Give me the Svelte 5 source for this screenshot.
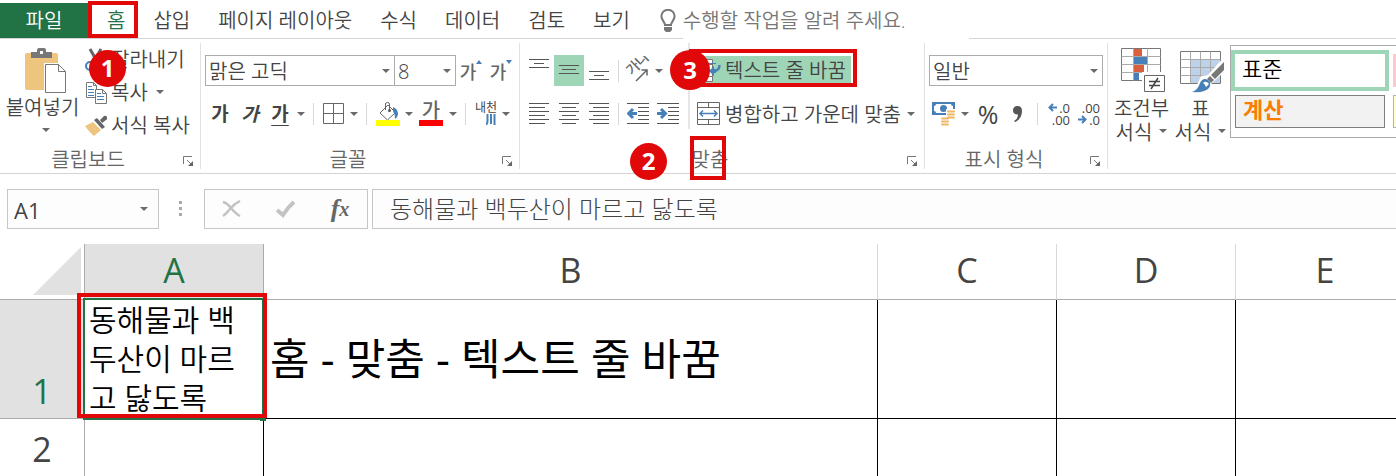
<script lang="ts">
	const tabs = ['삽입', '페이지 레이아웃', '수식', '데이터', '검토', '보기'];
	const columns = ['A', 'B', 'C', 'D', 'E'];

	let fontName = $state('맑은 고딕');
	let fontSize = $state('8');
	let numberFormat = $state('일반');
	let cellName = $state('A1');
	let formula = $state('동해물과 백두산이 마르고 닳도록');
</script>

{#snippet caret()}
	<svg class="caret" width="8" height="4" viewBox="0 0 8 4" aria-hidden="true">
		<path d="M0 0h8L4 4z" fill="#6a6a6a" />
	</svg>
{/snippet}

{#snippet more(label: string)}
	<button class="more" aria-label={label}>{@render caret()}</button>
{/snippet}

{#snippet lines(rows: number[][])}
	<svg width="22" height="24" viewBox="0 0 22 24" aria-hidden="true">
		{#each rows as [x, y, w]}
			<rect {x} {y} width={w} height="1" fill="#555" />
		{/each}
	</svg>
{/snippet}

{#snippet footer(label: string)}
	<footer class="group-footer">
		<span class="group-label">{label}</span>
		<button class="launcher" aria-label="{label} 설정">
			<svg width="11" height="11" viewBox="0 0 11 11" aria-hidden="true">
				<path d="M.5 8V.5H9M4 4l4 4" fill="none" stroke="#777" />
				<path d="M10 5v5H5z" fill="#666" />
			</svg>
		</button>
	</footer>
{/snippet}

<div class="app">
	<nav class="tabs">
		<button class="file">파일</button>
		<button class="tab home is-active">홈<span class="mark mark-home"></span></button>
		{#each tabs as tab (tab)}
			<button class="tab">{tab}</button>
		{/each}
		<label class="tell-me">
			<svg width="16" height="24" viewBox="0 0 16 24" aria-hidden="true">
				<path d="M5 16c0-3-3.6-4.600-3.600-9a6.600 6.200 0 0 1 13.200 0c0 4.400-3.600 6-3.600 9z" fill="none" stroke="#777" stroke-width="2" />
				<path d="M4 18h8v3l-2 2H6l-2-2z" fill="#777" />
			</svg>
			<input type="text" placeholder="수행할 작업을 알려 주세요." aria-label="수행할 작업" />
		</label>
	</nav>

	<div class="ribbon">
		<section class="group clipboard">
			<div class="body">
				<button class="paste">
					<svg width="42" height="46" viewBox="0 0 42 46" aria-hidden="true">
						<path d="M2 5h29q2 0 2 2v33q0 2-2 2H2q-2 0-2-2V7q0-2 2-2z" fill="#edc57f" />
						<path d="M6 10V4h6V2q0-2 2-2h5q2 0 2 2v2h6v6z" fill="#777" />
						<rect x="15" y="3" width="3" height="3" fill="#fff" />
						<path d="M19 15h16l8 8v23H19z" fill="#fff" />
						<path d="M20.500 16.500h13l7 7v21h-20zM33.500 16.500v7h7" fill="#fff" stroke="#777" />
					</svg>
					<span>붙여넣기</span>
					{@render caret()}
				</button>
				<div class="stack">
					<button class="item">
						<svg width="22" height="24" viewBox="0 0 22 24" aria-hidden="true">
							<path d="M5 1l8 14M16 1L8 15" stroke="#666" stroke-width="3" />
							<circle cx="5" cy="18" r="4" fill="none" stroke="#477fb8" stroke-width="2" />
							<circle cx="16" cy="18" r="4" fill="none" stroke="#477fb8" stroke-width="2" />
						</svg>
						잘라내기
					</button>
					<div class="split">
						<button class="item">
							<svg width="22" height="24" viewBox="0 0 22 24" aria-hidden="true">
								<path d="M1.500 1.500h7l3 3v12h-10zM8.500 1.500v3h3" fill="#fff" stroke="#777" />
								<path d="M3 5.500h4M3 8.500h6M3 11.500h6M3 14.500h6" stroke="#477fb8" />
								<path d="M10.500 8.500h7l4 4v10h-11zM17.500 8.500v4h4" fill="#fff" stroke="#777" />
								<path d="M12 12.500h4M12 15.500h7M12 18.500h7" stroke="#477fb8" />
							</svg>
							복사
						</button>
						{@render more('복사 옵션')}
					</div>
					<button class="item">
						<svg width="22" height="22" viewBox="0 0 22 22" aria-hidden="true">
							<path d="M0 11l8-4 8 8-7 6q-4-3-9-10z" fill="#edc57f" />
							<path d="M9 5l3-2 8 9-3 2z" fill="#666" />
							<path d="M15 5l4-4q2-1 3 1t-1 3l-4 3z" fill="#666" />
						</svg>
						서식 복사
					</button>
				</div>
			</div>
			{@render footer('클립보드')}
			<span class="badge badge-1">1</span>
		</section>

		<section class="group font">
			<div class="body rows">
				<div class="row">
					<div class="combo font-name">
						<select bind:value={fontName} aria-label="글꼴 이름"><option>맑은 고딕</option></select>
						{@render caret()}
					</div>
					<div class="combo font-size">
						<select bind:value={fontSize} aria-label="글꼴 크기"><option>8</option></select>
						{@render caret()}
					</div>
					<button class="tool resize" aria-label="글꼴 크기 크게">
						<span>가</span>
						<svg width="6" height="4" viewBox="0 0 6 4" aria-hidden="true"><path d="M0 4h6L3 0z" fill="#477fb8" /></svg>
					</button>
					<button class="tool resize" aria-label="글꼴 크기 작게">
						<span>가</span>
						<svg width="6" height="4" viewBox="0 0 6 4" aria-hidden="true"><path d="M0 0h6L3 4z" fill="#477fb8" /></svg>
					</button>
				</div>
				<div class="row">
					<button class="tool glyph bold">가</button>
					<button class="tool glyph bold italic">가</button>
					<button class="tool glyph bold underline">가</button>
					{@render more('밑줄 옵션')}
					<span class="sep"></span>
					<button class="tool narrow" aria-label="테두리">
						<svg width="22" height="22" viewBox="0 0 22 22" aria-hidden="true">
							<path d="M.5.5h20v20H.5zM10.500.5v20M.5 10.500h20" fill="none" stroke="#666" />
						</svg>
					</button>
					{@render more('테두리 옵션')}
					<span class="sep"></span>
					<button class="tool" aria-label="채우기 색">
						<svg width="24" height="24" viewBox="0 0 24 24" aria-hidden="true">
							<path d="M12 3l7.500 7.500L11.500 18 4 11z" fill="#fff" stroke="#666" />
							<path d="M9.500 8V2q0-1.500 2-1.500t2 1.500v6" fill="none" stroke="#666" />
							<circle cx="13.500" cy="8.500" r="1.500" fill="#555" />
							<path d="M17 5q5 2 5 7 0 3-3 5 0-5-2-8z" fill="#477fb8" />
							<rect y="18" width="24" height="6" fill="#ff0" />
						</svg>
					</button>
					{@render more('채우기 색 옵션')}
					<button class="tool color" aria-label="글꼴 색">
						<span>가</span>
						<i class="swatch"></i>
					</button>
					{@render more('글꼴 색 옵션')}
					<span class="sep"></span>
					<button class="tool narrow phonetic" aria-label="윗주 필드">
						<span>내천</span>
						<svg width="10" height="11" viewBox="0 0 10 11" aria-hidden="true">
							<path d="M1.500 0v7q0 2-1.500 4M5 0v10M8.500 0v11" fill="none" stroke="#477fb8" stroke-width="2" />
						</svg>
					</button>
					{@render more('윗주 옵션')}
				</div>
			</div>
			{@render footer('글꼴')}
		</section>

		<section class="group align">
			<div class="body">
				<div class="rows">
					<div class="row">
						<button class="tool" aria-label="위쪽 맞춤">{@render lines([[1, 0, 20], [6, 4, 10], [1, 8, 20]])}</button>
						<button class="tool is-on" aria-label="가운데 맞춤">{@render lines([[1, 6, 20], [4, 10, 14], [1, 14, 20]])}</button>
						<button class="tool" aria-label="아래쪽 맞춤">{@render lines([[1, 12, 20], [6, 16, 10], [1, 20, 20]])}</button>
						<span class="sep tight"></span>
						<button class="tool" aria-label="방향">
							<svg width="30" height="30" viewBox="0 0 30 30" aria-hidden="true">
								<text class="slanted" x="0" y="0" transform="translate(9 20) rotate(-45)">가나</text>
								<path d="M13 25l11-11M18.500 14H24v5.500" fill="none" stroke="#666" stroke-width="1.500" />
							</svg>
						</button>
						{@render more('방향 옵션')}
					</div>
					<div class="row">
						<button class="tool" aria-label="왼쪽 맞춤">{@render lines([[1, 1, 20], [1, 5, 16], [1, 9, 20], [1, 13, 16], [1, 17, 20], [1, 21, 16]])}</button>
						<button class="tool" aria-label="가로 가운데 맞춤">{@render lines([[1, 1, 20], [4, 5, 14], [1, 9, 20], [4, 13, 14], [1, 17, 20], [4, 21, 14]])}</button>
						<button class="tool" aria-label="오른쪽 맞춤">{@render lines([[1, 1, 20], [5, 5, 16], [1, 9, 20], [5, 13, 16], [1, 17, 20], [5, 21, 16]])}</button>
						<span class="sep tight"></span>
						<button class="tool" aria-label="내어쓰기">
							<svg width="22" height="24" viewBox="0 0 22 24" aria-hidden="true">
								<path d="M0 1.500h22M11 5.500h11M11 9.500h11M11 13.500h11M11 17.500h11M0 21.500h22" stroke="#555" />
								<path d="M10 11.500H2M6 7l-4.500 4.500L6 16" fill="none" stroke="#477fb8" stroke-width="3" />
							</svg>
						</button>
						<button class="tool" aria-label="들여쓰기">
							<svg width="22" height="24" viewBox="0 0 22 24" aria-hidden="true">
								<path d="M0 1.500h22M11 5.500h11M11 9.500h11M11 13.500h11M11 17.500h11M0 21.500h22" stroke="#555" />
								<path d="M0 11.500h8M4 7l4.500 4.500L4 16" fill="none" stroke="#477fb8" stroke-width="3" />
							</svg>
						</button>
					</div>
				</div>
				<span class="divider"></span>
				<div class="rows wide">
					<div class="row">
						<button class="item wrap is-on">
							<svg width="24" height="24" viewBox="0 0 24 24" aria-hidden="true">
								<path d="M1.500.5h14v22h-14zM1.500 5.500h14M1.500 17.500h14" fill="#fff" stroke="#777" />
								<path d="M9 4.500h10" stroke="#477fb8" />
								<path d="M22.500 6q0 6-6 6" fill="none" stroke="#477fb8" stroke-width="2.500" />
								<path d="M12 12l5-5v3h2v4h-2v3z" fill="#477fb8" />
							</svg>
							텍스트 줄 바꿈
						</button>
						<span class="mark mark-wrap"></span>
						<span class="badge badge-3">3</span>
					</div>
					<div class="row">
						<button class="item merge">
							<svg width="24" height="24" viewBox="0 0 24 24" aria-hidden="true">
								<path d="M.5.5h22v22H.5zM.5 5.500h22M.5 17.500h22M11.500.5v5M11.500 17.500v5" fill="none" stroke="#666" />
								<path d="M3 11.500h17M6 8.500l-3 3 3 3M17 8.500l3 3-3 3" fill="none" stroke="#477fb8" stroke-width="1.500" />
							</svg>
							<span>병합하고 가운데 맞춤</span>
						</button>
						{@render more('병합 옵션')}
					</div>
				</div>
			</div>
			{@render footer('맞춤')}
			<span class="mark mark-align"></span>
			<span class="badge badge-2">2</span>
		</section>

		<section class="group number">
			<div class="body rows">
				<div class="row">
					<div class="combo format">
						<select bind:value={numberFormat} aria-label="표시 형식"><option>일반</option></select>
						{@render caret()}
					</div>
				</div>
				<div class="row">
					<button class="tool" aria-label="회계 표시 형식">
						<svg width="24" height="24" viewBox="0 0 24 24" aria-hidden="true">
							<rect width="23" height="13" fill="#477fb8" />
							<path d="M2 4q2 0 2-2h15q0 2 2 2v5q-2 0-2 2H4q0-2-2-2z" fill="#fff" />
							<circle cx="11.500" cy="6.500" r="3.500" fill="#477fb8" />
							<path d="M14 7h10v11h-5v5H7v-9h7z" fill="#fff" />
							<path d="M16 9.500h6M16 12.500h6M16 15.500h6M10 16.500h6M10 19.500h6M10 22.500h6" stroke="#edb866" stroke-width="2" stroke-linecap="round" />
						</svg>
					</button>
					{@render more('회계 옵션')}
					<button class="tool percent">%</button>
					<button class="tool comma" aria-label="쉼표 스타일">
						<svg width="10" height="16" viewBox="0 0 10 16" aria-hidden="true">
							<path d="M1 15Q5 13 5 8.500 0 8.500 0 4.500 0 0 4.500 0 9 0 9 5q0 8-7 11z" fill="#555" />
						</svg>
					</button>
					<span class="sep"></span>
					<button class="tool digits" aria-label="자릿수 늘림">
						<span>
							<svg width="9" height="9" viewBox="0 0 9 9" aria-hidden="true">
								<path d="M9 4.500H2M5 1L1.500 4.500 5 8" fill="none" stroke="#477fb8" stroke-width="2" />
							</svg>.0
						</span>
						<span>.00</span>
					</button>
					<button class="tool digits" aria-label="자릿수 줄임">
						<span>.00</span>
						<span>
							<svg width="9" height="9" viewBox="0 0 9 9" aria-hidden="true">
								<path d="M0 4.500h7M4 1l3.500 3.500L4 8" fill="none" stroke="#477fb8" stroke-width="2" />
							</svg>.0
						</span>
					</button>
				</div>
			</div>
			{@render footer('표시 형식')}
		</section>

		<section class="group styles">
			<button class="large">
				<svg width="44" height="46" viewBox="0 0 44 46" aria-hidden="true">
					<path d="M.5 1.500h39v32H.5z" fill="#fff" stroke="#777" />
					<path d="M13 2h8v7h-8zM13 18h10v7H13z" fill="#d9603f" />
					<path d="M13 10h13v7H13zM13 26h5v7h-5z" fill="#477fb8" />
					<path d="M.5 9.500h39M.5 17.500h39M.5 25.500h39M12.500 1.500v32M26.500 1.500v32" stroke="#aaa" />
					<path d="M21 25h23v21H21z" fill="#fff" />
					<path d="M23.500 28.500h20v16h-20z" fill="#fff" stroke="#666" />
					<path d="M28 34.500h11M28 38.500h11M37 31l-7 11" stroke="#444" stroke-width="1.500" />
				</svg>
				<span>조건부</span>
				<span class="with-caret">서식 {@render caret()}</span>
			</button>
			<button class="large">
				<svg width="44" height="46" viewBox="0 0 44 46" aria-hidden="true">
					<path d="M.5 4.500h40v32H.5z" fill="#fff" stroke="#777" />
					<path d="M11 13h29v23H11z" fill="#bdd1e8" />
					<path d="M.5 12.500h40M.5 20.500h40M.5 28.500h40M10.500 4.500v32M20.500 4.500v32M30.500 4.500v32" stroke="#aaa" />
					<path d="M44 10v15L30 38l-7 8H8l8-6 5-11 7-1z" fill="#fff" />
					<path d="M44 15v8l-9 9-4-4z" fill="#777" />
					<path d="M30 29l4 4-3 3-4-4z" fill="#777" />
					<path d="M12 45q6-2 8-9 3-6 8-3 4 3 1 8-4 5-17 4z" fill="#477fb8" />
					<path d="M23 36q3-3 6 1l-3 3q-1-3-3-4z" fill="#fff" />
				</svg>
				<span>표</span>
				<span class="with-caret">서식 {@render caret()}</span>
			</button>
			<div class="gallery">
				<button class="style is-selected">표준</button>
				<button class="style bad" aria-label="나쁨"></button>
				<button class="style calc">계산</button>
				<button class="style note" aria-label="메모"></button>
			</div>
		</section>
	</div>

	<div class="formula-bar">
		<label class="name-box">
			<input type="text" bind:value={cellName} aria-label="이름 상자" />
			{@render caret()}
		</label>
		<svg class="grip" width="4" height="16" viewBox="0 0 4 16" aria-hidden="true">
			<path d="M0 0h3v3H0zM0 6h3v3H0zM0 12h3v3H0z" fill="#aaa" />
		</svg>
		<div class="actions">
			<button aria-label="취소">
				<svg width="20" height="18" viewBox="0 0 20 18" aria-hidden="true">
					<path d="M1 2q4 1 8 6 5 6 9 8M18 1Q12 4 8 9q-4 5-7 7" fill="none" stroke="#c3c3c3" stroke-width="2.500" />
				</svg>
			</button>
			<button aria-label="입력">
				<svg width="20" height="18" viewBox="0 0 20 18" aria-hidden="true">
					<path d="M1 10l6 5q5-8 11-13" fill="none" stroke="#c3c3c3" stroke-width="4" />
				</svg>
			</button>
			<button class="fx" aria-label="함수 삽입">f<sub>x</sub></button>
		</div>
		<input class="formula" type="text" bind:value={formula} aria-label="수식 입력줄" />
	</div>

	<div class="sheet">
		<table>
			<colgroup>
				<col class="c-head" />
				{#each columns as col (col)}
					<col class={col === 'B' ? 'c-wide' : 'c-std'} />
				{/each}
			</colgroup>
			<thead>
				<tr>
					<td class="corner">
						<svg width="48" height="48" viewBox="0 0 48 48" aria-hidden="true"><path d="M48 0v48H0z" fill="#e1e1e1" /></svg>
					</td>
					{#each columns as col (col)}
						<th scope="col" class:is-active={col === 'A'}>{col}</th>
					{/each}
				</tr>
			</thead>
			<tbody>
				<tr class="first">
					<th scope="row" class="is-active">1</th>
					<td class="selected">
						동해물과 백<br />두산이 마르<br />고 닳도록
						<span class="selection"></span>
						<span class="handle"></span>
						<span class="mark mark-cell"></span>
					</td>
					<td class="title">홈 - 맞춤 - 텍스트 줄 바꿈</td>
					<td></td>
					<td></td>
					<td></td>
				</tr>
				<tr class="second">
					<th scope="row">2</th>
					<td></td>
					<td></td>
					<td></td>
					<td></td>
					<td></td>
				</tr>
			</tbody>
		</table>
	</div>
</div>

<style>
	:global(body) {
		margin: 0;
		background: #fff;
	}

	.app {
		--line: #d4d4d4;
		--red: #e00808;
		--on: #9fd5b7;
		--green: #217346;
		overflow: hidden;
		color: #444;
		font-family: 'Open Sans', 'Noto Sans CJK KR', sans-serif;
		font-size: 20px;
		font-weight: 350;
		line-height: 24px;
	}

	button,
	input,
	select {
		box-sizing: border-box;
		margin: 0;
		padding: 0;
		border: 0;
		border-radius: 0;
		background: none;
		color: inherit;
		font: inherit;
		white-space: nowrap;
	}

	svg {
		flex: none;
	}

	/* tabs */
	.tabs {
		display: flex;
		height: 35px;
		padding-top: 3px;
		border-bottom: 1px solid var(--line);
	}

	.file {
		width: 88px;
		margin-right: 5px;
		background: var(--green);
		color: #fff;
	}

	.tab {
		padding: 0 14px;
	}

	.tab.is-active {
		position: relative;
		color: var(--green);
	}

	.tell-me {
		display: flex;
		align-items: center;
		gap: 7px;
		margin-left: 16px;
		color: #777;
	}

	.tell-me input {
		position: relative;
		width: 286px;
		height: 37px;
		background: #fff;
	}

	.tell-me input::placeholder {
		color: #777;
		opacity: 1;
	}

	/* ribbon */
	.ribbon {
		display: flex;
		padding: 4px 0;
		border-bottom: 1px solid var(--line);
	}

	.group {
		position: relative;
		flex: none;
		display: flex;
		flex-direction: column;
		box-sizing: border-box;
		height: 126px;
		border-right: 1px solid #e1e1e1;
	}

	.clipboard {
		width: 201px;
	}

	.font {
		width: 319px;
	}

	.align {
		width: 405px;
	}

	.number {
		width: 183px;
	}

	.body {
		flex: 1;
		display: flex;
	}

	.font .body,
	.align .body,
	.number .body {
		padding-left: 4px;
	}

	.rows {
		display: flex;
		flex-direction: column;
		gap: 12px;
		padding-top: 12px;
	}

	.row {
		position: relative;
		display: flex;
		align-items: center;
		height: 31px;
	}

	.group-footer {
		display: flex;
		align-items: center;
		height: 20px;
		padding-top: 2px;
		color: #666;
	}

	.group-label {
		flex: 1;
		padding: 2px 0 0 2px;
		text-align: center;
	}

	.launcher {
		display: flex;
		justify-content: flex-end;
		width: 26px;
		padding: 5px 6px 0 0;
	}

	.paste {
		display: flex;
		flex-direction: column;
		align-items: center;
		justify-content: flex-start;
		width: 85px;
		padding-top: 5px;
	}

	.paste svg:first-child {
		margin-left: 6px;
	}

	.paste span {
		margin: 2px 0 8px;
	}

	.paste .caret {
		margin-left: 6px;
	}

	.stack {
		display: flex;
		flex-direction: column;
	}

	.stack .item {
		height: 33px;
	}

	.split {
		display: flex;
	}

	.item {
		display: flex;
		align-items: center;
		gap: 4px;
	}

	.more {
		display: flex;
		align-items: center;
		justify-content: center;
		width: 12px;
		height: 31px;
	}

	.split .more {
		width: 24px;
	}

	.tool {
		display: flex;
		align-items: center;
		justify-content: center;
		width: 30px;
		height: 31px;
	}

	.tool.narrow {
		width: 28px;
	}

	.is-on {
		background: var(--on);
	}

	.glyph {
		font-size: 19px;
	}

	.bold {
		font-weight: 700;
	}

	.italic {
		font-style: italic;
	}

	.underline {
		text-decoration: underline;
		text-decoration-thickness: 1px;
		text-underline-offset: 4px;
	}

	.resize {
		align-items: flex-start;
		color: #666;
		font-size: 18px;
		font-weight: 500;
	}

	.resize span {
		padding-top: 5px;
	}

	.resize svg {
		margin-top: 5px;
	}

	.color {
		flex-direction: column;
		width: 32px;
		color: #666;
		font-weight: 500;
		line-height: 19px;
	}

	.swatch {
		width: 24px;
		height: 6px;
		background: #f00;
	}

	.phonetic {
		flex-direction: column;
		font-size: 12px;
		font-weight: 400;
		line-height: 12px;
	}

	.phonetic svg {
		align-self: flex-end;
		margin-right: 4px;
	}

	.slanted {
		font-size: 14px;
		font-weight: 500;
		fill: #666;
	}

	.sep {
		width: 1px;
		height: 22px;
		margin: 0 6px;
		background: #d9d9d9;
	}

	.sep.tight {
		margin: 0 4px;
	}

	.divider {
		width: 2px;
		height: 86px;
		margin: 0 5px;
		background: #e6e6e6;
	}

	.wide {
		flex: 1;
	}

	.wide .row {
		justify-content: space-between;
		padding-right: 7px;
	}

	.wrap {
		height: 29px;
		padding-right: 5px;
	}

	.wrap,
	.merge {
		padding-left: 2px;
	}

	.merge span {
		padding-top: 2px;
	}

	.combo {
		display: grid;
		align-items: center;
		height: 31px;
		box-sizing: border-box;
		border: 1px solid #ababab;
	}

	.combo select,
	.combo .caret {
		grid-area: 1 / 1;
	}

	.combo select {
		width: 100%;
		height: 29px;
		padding: 2px 0 0 3px;
		appearance: none;
	}

	.combo .caret {
		justify-self: end;
		margin-right: 4px;
		pointer-events: none;
	}

	.font-name {
		width: 190px;
	}

	.font-size {
		width: 61px;
		border-left: 0;
	}

	.format {
		width: 174px;
	}

	.percent {
		width: 34px;
		font-size: 25px;
		font-weight: 400;
	}

	.comma {
		width: 26px;
	}

	.digits {
		flex-direction: column;
		align-items: flex-end;
		padding-right: 4px;
		font-size: 13px;
		font-weight: 400;
		line-height: 12px;
	}

	.digits span {
		display: flex;
		align-items: center;
		gap: 2px;
	}

	.styles {
		flex: 1;
		flex-direction: row;
		min-width: 0;
		padding-left: 4px;
		border-right: 0;
	}

	.large {
		display: flex;
		flex-direction: column;
		align-items: center;
		justify-content: flex-start;
		width: 59px;
		padding-top: 4px;
	}

	.large svg:first-child {
		margin: 0 0 4px 2px;
	}

	.with-caret {
		display: flex;
		align-items: center;
		gap: 5px;
	}

	.gallery {
		flex: 1;
		display: grid;
		grid-template-columns: 150px 150px;
		grid-template-rows: 33px 33px;
		gap: 8px;
		box-sizing: border-box;
		height: 93px;
		margin-top: 2px;
		padding: 8px 0 0 4px;
		overflow: hidden;
		border: 1px solid #ababab;
		border-right: 0;
	}

	.style {
		padding: 0 0 5px 7px;
		font-size: 22px;
		text-align: left;
	}

	.style.is-selected {
		color: #000;
		outline: 4px solid var(--on);
	}

	.style.calc {
		border: 1px solid #7f7f7f;
		background: #f2f2f2;
		color: #fa7d00;
		font-weight: 700;
	}

	.style.bad {
		background: #ffc7ce;
	}

	.style.note {
		border: 1px solid #b2b2b2;
		background: #ffc;
	}

	/* formula bar */
	.formula-bar {
		display: flex;
		align-items: center;
		padding: 15px 0 15px 7px;
	}

	.name-box,
	.actions,
	.formula {
		box-sizing: border-box;
		height: 40px;
		border: 1px solid #c6c6c6;
		background: #fdfdfd;
	}

	.name-box {
		display: flex;
		align-items: center;
		width: 152px;
		padding: 0 10px 0 6px;
	}

	.name-box input {
		flex: 1;
		min-width: 0;
		padding-top: 2px;
		font-size: 22px;
		font-weight: 400;
	}

	.grip {
		margin: 0 21px 0 20px;
	}

	.actions {
		display: flex;
		width: 164px;
		margin-right: 4px;
	}

	.actions button {
		flex: 1;
		display: flex;
		align-items: center;
		justify-content: center;
	}

	.actions .fx {
		color: #666;
		font-family: 'Liberation Serif', serif;
		font-size: 26px;
		font-style: italic;
		font-weight: 700;
	}

	.fx sub {
		font-size: 20px;
	}

	.formula {
		flex: 1;
		min-width: 0;
		padding: 0 0 4px 17px;
		border-right: 0;
		font-size: 24px;
		font-weight: 300;
	}

	/* sheet */
	.sheet {
		overflow: hidden;
	}

	table {
		width: 1415px;
		border-collapse: separate;
		border-spacing: 0;
		table-layout: fixed;
	}

	.c-head {
		width: 85px;
	}

	.c-std {
		width: 179px;
	}

	.c-wide {
		width: 614px;
	}

	th,
	td {
		box-sizing: border-box;
		padding: 0;
		border-right: 1px solid #000;
		border-bottom: 1px solid #000;
	}

	th {
		font-size: 34px;
		font-weight: 400;
		line-height: 40px;
	}

	thead th,
	thead .corner {
		height: 56px;
		padding-bottom: 4px;
		border-right-color: #d9d9d9;
		border-bottom-color: #ababab;
	}

	.corner svg {
		display: block;
		margin: 3px 0 0 33px;
	}

	th.is-active,
	thead .corner,
	tbody th {
		border-color: #ababab;
	}

	th.is-active {
		background: #e1e1e1;
		color: var(--green);
	}

	tbody th {
		padding-bottom: 7px;
		vertical-align: bottom;
	}

	.first {
		height: 119px;
	}

	.second {
		height: 57px;
	}

	.second td,
	.second th {
		border-bottom: 0;
	}

	.selected {
		position: relative;
		padding: 0 0 1px 4px;
		color: #000;
		font-size: 30px;
		font-weight: 350;
		line-height: 39px;
		white-space: nowrap;
	}

	.title {
		padding-left: 6px;
		color: #000;
		font-size: 43px;
		font-weight: 400;
		line-height: 50px;
	}

	.selection {
		position: absolute;
		inset: -2px -1px -2px -2px;
		border: 2px solid var(--green);
	}

	.handle {
		position: absolute;
		right: -3px;
		bottom: -3px;
		width: 6px;
		height: 5px;
		background: var(--green);
	}

	/* callouts */
	.mark {
		position: absolute;
		box-sizing: border-box;
		border: 4px solid var(--red);
		pointer-events: none;
	}

	.mark-home {
		inset: -2px 1px 0 -5px;
	}

	.mark-wrap {
		inset: -6px 67px -1px -6px;
	}

	.mark-align {
		left: 170px;
		bottom: -11px;
		width: 36px;
		height: 44px;
	}

	.mark-cell {
		inset: -7px -4px 0 -8px;
	}

	.badge {
		position: absolute;
		width: 37px;
		height: 37px;
		border-radius: 50%;
		background: var(--red);
		color: #fff;
		font-size: 24px;
		font-weight: 700;
		line-height: 36px;
		text-align: center;
	}

	.badge-1 {
		top: 7px;
		left: 89px;
	}

	.badge-2 {
		bottom: -11px;
		left: 110px;
	}

	.badge-3 {
		top: -5px;
		left: -25px;
		width: 40px;
		height: 40px;
		line-height: 39px;
	}
</style>
